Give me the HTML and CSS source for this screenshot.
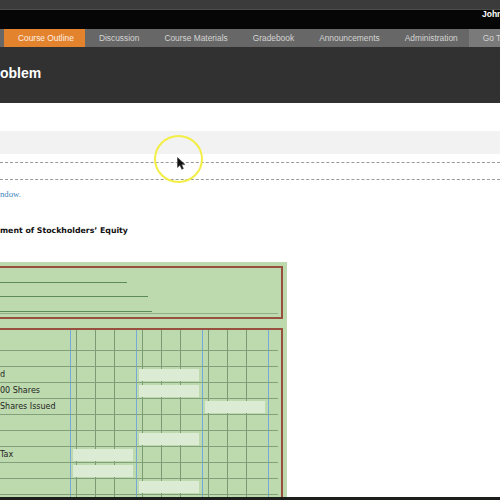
FILE: index.html
```html
<!DOCTYPE html>
<html>
<head>
<meta charset="utf-8">
<link rel="stylesheet" href="styles.css">
</head>
<body>
<div class="topbar"></div>
<div class="userbar"><span class="user">John</span></div>
<nav class="nav">
  <span class="tab active">Course Outline</span>
  <span class="tab">Discussion</span>
  <span class="tab">Course Materials</span>
  <span class="tab">Gradebook</span>
  <span class="tab">Announcements</span>
  <span class="tab">Administration</span>
  <span class="tab goto">Go To</span>
</nav>
<header class="pagehead"><h1>oblem</h1></header>
<main class="content">
  <div class="band"></div>
  <div class="dashes"></div>
  <p class="note"><a class="link">ndow.</a></p>
  <h2 class="title">ment of Stockholders’ Equity</h2>
  <section class="sheet">
    <div class="box head-box">
      <div class="field f1"></div>
      <div class="field f2"></div>
      <div class="field f3"></div>
      <div class="rule"></div>
    </div>
    <div class="box grid-box">
      <div class="row first"><div class="label"></div><div class="grp"></div><div class="grp"></div><div class="grp"></div><div class="tail"></div></div>
      <div class="row"><div class="label"></div><div class="grp"></div><div class="grp"></div><div class="grp"></div><div class="tail"></div></div>
      <div class="row"><div class="label">d</div><div class="grp"></div><div class="grp"><div class="fill"></div></div><div class="grp"></div><div class="tail"></div></div>
      <div class="row"><div class="label">00 Shares</div><div class="grp"></div><div class="grp"><div class="fill"></div></div><div class="grp"></div><div class="tail"></div></div>
      <div class="row"><div class="label">Shares Issued</div><div class="grp"></div><div class="grp"></div><div class="grp"><div class="fill"></div></div><div class="tail"></div></div>
      <div class="row"><div class="label"></div><div class="grp"></div><div class="grp"></div><div class="grp"></div><div class="tail"></div></div>
      <div class="row"><div class="label"></div><div class="grp"></div><div class="grp"><div class="fill"></div></div><div class="grp"></div><div class="tail"></div></div>
      <div class="row"><div class="label">Tax</div><div class="grp"><div class="fill"></div></div><div class="grp"></div><div class="grp"></div><div class="tail"></div></div>
      <div class="row"><div class="label"></div><div class="grp"><div class="fill"></div></div><div class="grp"></div><div class="grp"></div><div class="tail"></div></div>
      <div class="row"><div class="label"></div><div class="grp"></div><div class="grp"><div class="fill"></div></div><div class="grp"></div><div class="tail"></div></div>
      <div class="row"><div class="label"></div><div class="grp"></div><div class="grp"></div><div class="grp"></div><div class="tail"></div></div>
    </div>
  </section>
</main>
<div class="spot">
  <svg class="cursor" width="9" height="13" viewBox="0 0 9 13"><path d="M0.5 0.5 L0.5 10.5 L3 8.2 L4.8 12.3 L6.4 11.6 L4.7 7.6 L8 7.6 Z" fill="#111" stroke="#444" stroke-width="0.6"/></svg>
</div>
<div class="player-bar"></div>
</body>
</html>
```
FILE: styles.css
```css
body {
  margin: 0;
  width: 500px;
  height: 500px;
  overflow: hidden;
  position: relative;
  background: #fff;
  font-family: "Liberation Sans", Arial, sans-serif;
}
.topbar {
  height: 9px;
  background: #3b3b3b;
  border-bottom: 1px solid #4c4c4c;
}
.userbar {
  height: 19px;
  background: #060606;
  padding-left: 482px;
  box-sizing: border-box;
  white-space: nowrap;
  overflow: hidden;
  font-weight: bold;
  font-size: 8.5px;
  line-height: 9px;
  color: #fff;
}
.nav {
  display: flex;
  height: 18px;
  background: #676767;
  padding-left: 4px;
  font-size: 8.4px;
  color: #d4d4d4;
  white-space: nowrap;
  overflow: hidden;
}
.tab {
  padding: 0 11px 0 14px;
  line-height: 18px;
}
.tab.active {
  background: #e4832d;
  color: #fcefe2;
}
.tab.goto {
  background: #7a7a7a;
  flex: 1;
}
.pagehead {
  height: 56px;
  background: #313131;
  box-sizing: border-box;
  padding-top: 18px;
}
.pagehead h1 {
  margin: 0;
  font-weight: bold;
  font-size: 14px;
  line-height: 17px;
  color: #fff;
}
.content {
  padding-top: 28px;
}
.band {
  height: 23px;
  background: #f2f2f2;
}
.dashes {
  margin-top: 8px;
  height: 16px;
  border-top: 1px dashed #9a9a9a;
  border-bottom: 1px dashed #9a9a9a;
}
.note {
  margin: 9px 0 0;
  font-family: "Liberation Serif", "Times New Roman", serif;
  font-size: 8.7px;
  line-height: 10px;
}
.link {
  color: #3d86bd;
}
.title {
  margin: 26px 0 0;
  font-family: "DejaVu Sans", Verdana, sans-serif;
  font-weight: bold;
  font-size: 7.8px;
  line-height: 11px;
  color: #111;
}
.sheet {
  margin-top: 26px;
  width: 287px;
  padding-top: 4px;
  padding-bottom: 20px;
  background: #bddaae;
}
.box {
  width: 283px;
  box-sizing: border-box;
  border: 2px solid #98513f;
  border-left: none;
}
.field {
  border-bottom: 1px solid #5e8a55;
}
.f1 { height: 14px; width: 127px; }
.f2 { height: 13px; width: 148px; }
.f3 { height: 14px; width: 152px; }
.rule {
  margin-top: 1px;
  width: 278px;
  border-bottom: 1px solid #93b08a;
  height: 0;
  margin-bottom: 3px;
}
.grid-box {
  margin-top: 9px;
}
.row {
  display: flex;
  height: 16px;
  width: 278px;
  box-sizing: border-box;
  border-bottom: 1px solid #82a07a;
}
.row.first {
  height: 21px;
}
.label {
  width: 70px;
  font-family: "DejaVu Sans", Verdana, sans-serif;
  font-size: 8px;
  line-height: 15px;
  color: #1e1e1e;
  white-space: nowrap;
}
.grp {
  width: 66px;
  display: flex;
  align-items: center;
  background: linear-gradient(to right,
    #74a9da 0, #74a9da 1px,
    transparent 1px, transparent 6px,
    #7a9a73 6px, #7a9a73 7px,
    transparent 7px, transparent 25px,
    #7a9a73 25px, #7a9a73 26px,
    transparent 26px, transparent 44px,
    #7a9a73 44px, #7a9a73 45px,
    transparent 45px);
}
.tail {
  width: 10px;
  background: linear-gradient(to right, #74a9da 0, #74a9da 1px, transparent 1px);
}
.fill {
  margin-left: 3px;
  width: 60px;
  height: 12px;
  background: #dcecd4;
}
.spot {
  position: absolute;
  left: 154px;
  top: 135px;
  width: 49px;
  height: 48px;
  box-sizing: border-box;
  border: 2px solid #f2ee45;
  border-radius: 50%;
}
.cursor {
  position: absolute;
  left: 21px;
  top: 20px;
}
.player-bar {
  position: absolute;
  left: 0;
  bottom: 0;
  width: 500px;
  height: 3px;
  background: #1c1e1c;
}
```
